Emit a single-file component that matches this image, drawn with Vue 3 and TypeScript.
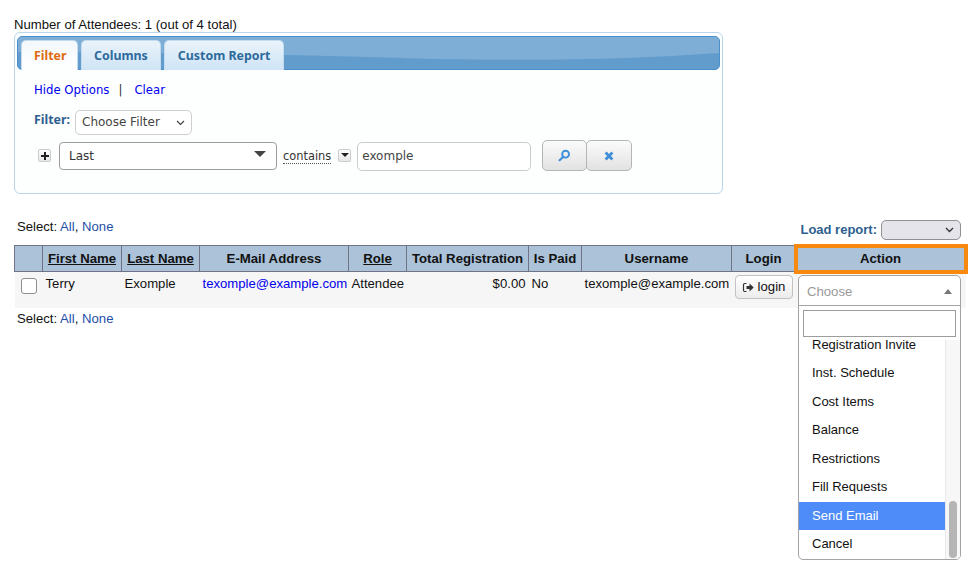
<script setup lang="ts">
const headers = [
  { label: '', link: false },
  { label: 'First Name', link: true },
  { label: 'Last Name', link: true },
  { label: 'E-Mail Address', link: false },
  { label: 'Role', link: true },
  { label: 'Total Registration', link: false },
  { label: 'Is Paid', link: false },
  { label: 'Username', link: false },
  { label: 'Login', link: false },
  { label: 'Action', link: false },
]
const widths = [28, 79, 78, 149, 58, 122, 53, 150, 64, 170]
const options = ['Inst. Schedule', 'Cost Items', 'Balance', 'Restrictions', 'Fill Requests', 'Send Email', 'Cancel']
</script>

<template>
  <div class="page">
    <div class="count">Number of Attendees: 1 (out of 4 total)</div>
    <section class="panel">
      <div class="tabbar">
        <svg class="wave" viewBox="0 0 703 32" preserveAspectRatio="none"><path d="M0 0H703V16C620 22 540 24 420 22C330 20 300 17 0 15Z" fill="#7eadd6"/></svg>
        <div class="tab active">Filter</div>
        <div class="tab">Columns</div>
        <div class="tab">Custom Report</div>
      </div>
      <div class="links"><a>Hide Options</a><span class="sep">|</span><a>Clear</a></div>
      <div class="filter-row">
        <b>Filter:</b>
        <div class="choose">Choose Filter
          <svg width="9" height="6" viewBox="0 0 9 6"><path d="M1 1l3.5 3.5L8 1" fill="none" stroke="#444" stroke-width="1.2"/></svg>
        </div>
      </div>
      <div class="cond-row">
        <span class="plus"><svg width="8" height="8" viewBox="0 0 8 8"><path d="M3 0h2v3h3v2H5v3H3V5H0V3h3z" fill="#222"/></svg></span>
        <div class="last">Last<i class="caret"></i></div>
        <span class="contains">contains</span>
        <span class="mini"><i></i></span>
        <div class="text-input">exomple</div>
        <div class="btns">
          <button class="ib">
            <svg width="13" height="13" viewBox="0 0 13 13"><circle cx="7.6" cy="5.2" r="3.4" fill="none" stroke="#3f8fd8" stroke-width="1.9"/><path d="M5 8L1.6 11.2" stroke="#3f8fd8" stroke-width="2.2" stroke-linecap="round"/></svg>
          </button>
          <button class="ib second">
            <svg width="10" height="10" viewBox="0 0 10 10"><path d="M1.6 1.6l6.8 6.8M8.4 1.6L1.6 8.4" stroke="#3f8fd8" stroke-width="2.8"/></svg>
          </button>
        </div>
      </div>
    </section>

    <div class="select-top-row">
      <div class="select-line top">Select: <a>All</a>, <a>None</a></div>
      <div class="load"><b>Load report:</b><div class="load-sel"><svg width="9" height="6" viewBox="0 0 9 6"><path d="M1 1l3.5 3.5L8 1" fill="none" stroke="#333" stroke-width="1.3"/></svg></div></div>
    </div>

    <table class="grid">
      <colgroup><col v-for="(w, i) in widths" :key="i" :style="{ width: w + 'px' }"></colgroup>
      <thead>
        <tr>
          <th v-for="h in headers" :key="h.label" :class="{ u: h.link, action: h.label === 'Action' }">{{ h.label }}</th>
        </tr>
      </thead>
      <tbody>
        <tr>
          <td class="cb"><span class="check"></span></td>
          <td>Terry</td>
          <td>Exomple</td>
          <td><a class="mail">texomple@example.com</a></td>
          <td>Attendee</td>
          <td class="r">$0.00</td>
          <td>No</td>
          <td>texomple@example.com</td>
          <td class="login-cell">
            <span class="login">
              <svg width="13" height="11" viewBox="0 0 12 11"><path d="M4 1.5H2.2Q1 1.5 1 2.7v5.6q0 1.2 1.2 1.2H4" fill="none" stroke="#333" stroke-width="1.2"/><path d="M4 4h3V1.6L11.2 5.5 7 9.4V7H4z" fill="#333"/></svg>
              login
            </span>
          </td>
          <td class="action-cell"></td>
        </tr>
      </tbody>
    </table>
    <div class="select-line bottom">Select: <a>All</a>, <a>None</a></div>

    <div class="dropdown">
      <div class="dd-head">Choose<i class="up"></i></div>
      <div class="dd-search"><div class="dd-input"></div></div>
      <div class="dd-list">
        <div class="dd-items">
          <div class="clip">Registration Invite</div>
          <div v-for="o in options" :key="o" class="opt" :class="{ hl: o === 'Send Email' }">{{ o }}</div>
        </div>
        <div class="scroll"><div class="thumb"></div></div>
      </div>
    </div>
  </div>
</template>

<style>
html, body { margin: 0; background: #fff; }
</style>

<style scoped>
.page { position: relative; width: 977px; height: 582px; overflow: hidden; font-family: "Liberation Sans", Arial, sans-serif; font-size: 13.15px; color: #111; }
.count { padding: 17px 0 0 14px; height: 15px; line-height: 15px; }
.panel { margin-left: 14px; width: 709px; height: 162px; box-sizing: border-box; border: 1px solid #b9d5ea; border-radius: 6px; padding: 3px 2px; background: #fdfefe; font-family: "DejaVu Sans", sans-serif; font-size: 12px; }
.tabbar { position: relative; height: 34px; box-sizing: border-box; border: 1px solid #4a8fca; border-radius: 5px; padding: 3px 0 0 3px; display: flex; gap: 3px; align-items: flex-end; background: #629ccc; overflow: visible; }
.wave { position: absolute; left: 0; top: 0; width: 100%; height: 100%; border-radius: 4px; }
.tab { position: relative; height: 30px; box-sizing: border-box; padding: 0 12.5px; line-height: 30px; font-family: "Noto Sans", sans-serif; font-weight: bold; font-size: 12.4px; color: #2e6a9c; border: 1px solid #c3dcf0; border-bottom: 0; border-radius: 5px 5px 0 0; background: linear-gradient(to bottom, #e9f3fb, #cfe4f5); margin-bottom: -1px; }
.tab.active { color: #e06a12; background: linear-gradient(to bottom, #f3f8fc, #ffffff); padding: 0 10px 0 12px; }
.links { padding: 12px 0 0 17px; line-height: 16px; color: #0000ee; font-size: 11.7px; }
.links .sep { color: #333; margin: 0 12px 0 9px; }
.filter-row { display: flex; align-items: flex-start; padding: 12px 0 0 17px; height: 25px; }
.filter-row b { color: #2e5f8f; font-family: "Noto Sans", sans-serif; font-size: 12.4px; line-height: 20px; margin-right: 5px; }
.choose { width: 117px; height: 25px; box-sizing: border-box; border: 1px solid #cfcfcf; border-radius: 5px; background: #fff; color: #444; padding: 0 6px; line-height: 23px; display: flex; justify-content: space-between; align-items: center; font-size: 12px; }
.cond-row { display: flex; align-items: flex-start; padding: 7px 0 0 21px; }
.plus { width: 13px; height: 13px; margin-top: 7px; border: 1px solid #ccc; border-radius: 2px; background: linear-gradient(#fff, #e6e6e6); display: flex; align-items: center; justify-content: center; box-sizing: border-box; }
.last { position: relative; width: 218px; height: 28px; box-sizing: border-box; margin-left: 8px; border: 1px solid #9b9b9b; border-radius: 4px; background: #fff; color: #333; padding-left: 9px; line-height: 26px; }
.caret { position: absolute; right: 10px; top: 8px; border: 6px solid transparent; border-top: 6px solid #444; border-bottom: 0; }
.contains { margin-left: 6px; line-height: 16px; margin-top: 6px; color: #333; border-bottom: 1px dotted #555; height: 15px; font-size: 11.4px; }
.mini { width: 13px; height: 13px; margin: 7px 0 0 7px; border: 1px solid #ccc; border-radius: 2px; box-sizing: border-box; background: linear-gradient(#fff, #e6e6e6); position: relative; }
.mini i { position: absolute; left: 2px; top: 3px; border: 4px solid transparent; border-top: 4px solid #222; border-bottom: 0; }
.text-input { width: 174px; height: 29px; box-sizing: border-box; margin-left: 6px; border: 1px solid #ccc; border-radius: 5px; background: #fff; color: #444; padding-left: 4px; line-height: 27px; }
.btns { display: flex; margin-left: 11px; margin-top: -2px; }
.ib { width: 45px; height: 31px; padding: 0; border: 1px solid #b5b5b5; border-radius: 5px; background: linear-gradient(#fbfbfb, #e2e2e2); display: flex; align-items: center; justify-content: center; }
.ib.second { width: 46px; margin-left: -1px; }
.select-top-row { display: flex; justify-content: space-between; height: 51px; }
.select-line { padding-left: 17px; line-height: 15px; }
.select-line a { color: #1f4fa8; }
.select-line.top { padding-top: 25px; }
.load { display: flex; padding: 26px 16px 0 0; align-items: flex-start; }
.load b { color: #2e5f8f; font-size: 13px; line-height: 20px; margin-right: 4px; }
.load-sel { width: 80px; height: 20px; box-sizing: border-box; border: 1px solid #8f8f94; border-radius: 5px; background: #e4e4ea; display: flex; align-items: center; justify-content: flex-end; padding-right: 6px; }
.grid { margin-left: 14px; width: 951px; table-layout: fixed; border-collapse: collapse; font-size: 13.15px; }
.grid th { height: 26px; padding: 0 2px; background: #abc2d8; border: 1px solid #6f7385; font-weight: bold; text-align: center; white-space: nowrap; box-sizing: border-box; font-size: 13.2px; }
.grid th.u { text-decoration: underline; }
.grid th.action { outline: 4px solid #f7890f; outline-offset: -2px; border-color: #f7890f; }
.grid td { height: 36px; padding: 4px 3px 3px; background: #f6f6f6; vertical-align: top; white-space: nowrap; box-sizing: border-box; line-height: 16px; overflow: visible; }
.grid td.r { text-align: right; }
.mail { color: #0000ee; }
.grid td.cb { padding: 6px 0 0 6px; }
.check { display: block; width: 16px; height: 16px; border: 1px solid #8f8f8f; border-radius: 3px; background: #fff; box-sizing: border-box; }
.grid td.login-cell { padding: 3px 0 0 3px; }
.login { display: inline-flex; align-items: center; gap: 3px; width: 58px; height: 24px; justify-content: center; box-sizing: border-box; border: 1px solid #c2c2c2; border-radius: 4px; background: linear-gradient(#fff, #ececec); }
.select-line.bottom { padding-top: 3px; }
.dropdown { position: absolute; left: 798px; top: 275px; width: 163px; height: 285px; box-sizing: border-box; border: 1px solid #a3a3a3; border-radius: 5px; background: #fff; overflow: hidden; color: #111; }
.dd-head { height: 30px; box-sizing: border-box; line-height: 31px; padding-left: 8px; color: #999; border-bottom: 1px solid #a3a3a3; position: relative; }
.up { position: absolute; right: 8px; top: 13px; border: 4.5px solid transparent; border-bottom: 5px solid #777; border-top: 0; }
.dd-search { padding: 4px 4px 3px; }
.dd-input { height: 27px; box-sizing: border-box; border: 1px solid #9c9c9c; background: #fff; }
.dd-list { height: 219px; overflow: hidden; display: flex; font-size: 13px; }
.dd-items { width: 146px; }
.clip { height: 25px; margin-top: -6px; padding-left: 13px; line-height: 21px; white-space: nowrap; }
.opt { height: 28.5px; line-height: 28.5px; padding-left: 13px; }
.opt.hl { background: #4e8cf9; color: #fff; }
.scroll { width: 15px; background: #f7f7f7; border-left: 1px solid #e8e8e8; box-sizing: border-box; position: relative; }
.thumb { position: absolute; left: 3px; top: 161px; width: 8px; height: 57px; border-radius: 4px; background: #b5b5b5; }
</style>
